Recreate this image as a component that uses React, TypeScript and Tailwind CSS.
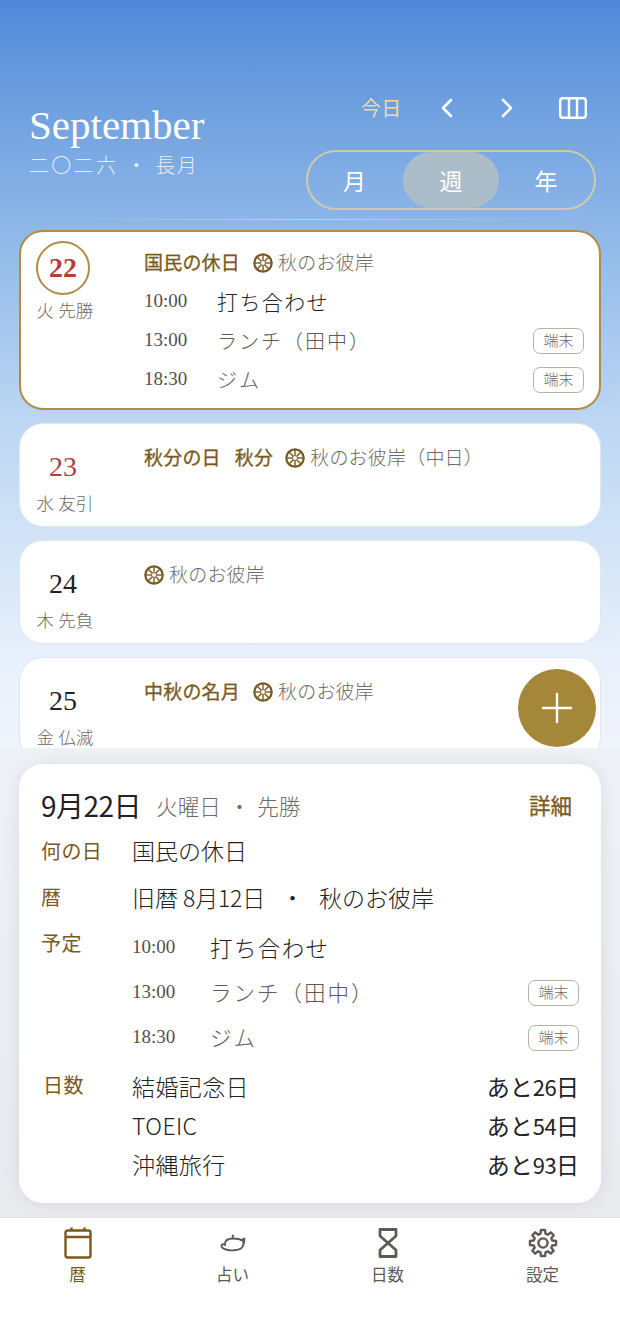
import React from "react";

const jp = "font-['Noto_Sans_CJK_JP','Noto_Sans',sans-serif]";
const serif = "font-['Liberation_Serif',serif] oldstyle-nums";

function gearPath() {
  const n = 8;
  const pts: string[] = [];
  for (let i = 0; i < n; i++) {
    const c = (i * 360) / n - 90;
    const seq: [number, number][] = [
      [c - 15, 9.6],
      [c - 9, 13.2],
      [c + 9, 13.2],
      [c + 15, 9.6],
    ];
    for (const [a, r] of seq) {
      const t = (a * Math.PI) / 180;
      pts.push(`${(15 + r * Math.cos(t)).toFixed(2)} ${(15 + r * Math.sin(t)).toFixed(2)}`);
    }
  }
  return "M" + pts.join(" L") + " Z";
}

function Wheel() {
  const spokes = [0, 45, 90, 135];
  return (
    <svg width="20" height="20" viewBox="0 0 20 20" className="shrink-0">
      <circle cx="10" cy="10" r="8.7" fill="none" stroke="#7a5a1c" strokeWidth="2.2" />
      {spokes.map((a) => (
        <line key={a} x1="10" y1="2" x2="10" y2="18" stroke="#7a5a1c" strokeWidth="1.4" transform={`rotate(${a} 10 10)`} />
      ))}
      <circle cx="10" cy="10" r="2.4" fill="#fff" stroke="#7a5a1c" strokeWidth="0.8" />
    </svg>
  );
}

function Holiday({ children }: { children: React.ReactNode }) {
  return <span className="text-[19px] font-normal tracking-[0.2px] text-[#7a5a1c] [-webkit-text-stroke:0.3px_#7a5a1c]">{children}</span>;
}

function Higan({ text = "秋のお彼岸" }: { text?: string }) {
  return (
    <span className="flex items-center gap-[5px]">
      <Wheel />
      <span className="text-[19px] font-light tracking-[0.2px] text-[#6f6a63]">{text}</span>
    </span>
  );
}

function Tag() {
  return (
    <span className="flex h-[26px] w-[51px] items-center justify-center rounded-[7px] border-[1.5px] border-[#b5b2ac] text-[15px] font-light text-[#6f6a63]">
      端末
    </span>
  );
}

function DayLeft({ num, sub, color, ring }: { num: string; sub: string; color: string; ring?: boolean }) {
  return (
    <div className={`flex w-[88px] shrink-0 flex-col items-center ${ring ? "" : "ml-[1px]"}`}>
      <div className={`mr-[4px] flex h-[54px] w-[54px] items-center justify-center rounded-full ${ring ? "border-2 border-[#b08d44]" : ""}`}>
        <span className={`${serif} text-[28px] leading-none ${ring ? "font-bold" : "font-normal"} ${color}`}>{num}</span>
      </div>
      <span className={`text-[17.5px] font-light leading-[24px] tracking-[0.2px] text-[#6f6a63] ${ring ? "mt-[3px]" : "-mt-[3px]"}`}>{sub}</span>
    </div>
  );
}

function TimeRow({ time, title, tag, dark, w, h, ts }: { time: string; title: string; tag?: boolean; dark?: boolean; w: string; h: string; ts: string }) {
  return (
    <div className={`flex items-center ${h}`}>
      <span className={`${serif} ${w} shrink-0 text-[19px] text-[#555049]`}>{time}</span>
      <span className={`flex-1 font-light ${ts} ${dark ? "tracking-[1.4px] text-[#25221e]" : "tracking-[2px] text-[#5f5a53]"}`}>{title}</span>
      {tag && <Tag />}
    </div>
  );
}

function Label({ children, className = "" }: { children: React.ReactNode; className?: string }) {
  return <div className={`w-[91px] shrink-0 text-[20px] font-normal leading-[28px] tracking-[0.4px] text-[#7a5a1c] ${className}`}>{children}</div>;
}

function CountRow({ name, n }: { name: string; n: string }) {
  return (
    <div className="flex h-[39px] items-center justify-between text-[#25221e]">
      <span className="text-[23px] font-light tracking-[0.4px]">{name}</span>
      <span className="text-[23px] font-normal">
        あと<span className="text-[22px] tracking-[-0.6px]">{n}</span>日
      </span>
    </div>
  );
}

function NavItem({ icon, label, active }: { icon: React.ReactNode; label: string; active?: boolean }) {
  return (
    <div className="flex flex-col items-center">
      <div className="flex h-[32px] items-center justify-center">{icon}</div>
      <span className={`mt-[3px] text-[16.5px] font-normal leading-[24px] ${active ? "text-[#7a5a1c]" : "text-[#5f5a53]"}`}>{label}</span>
    </div>
  );
}

export default function App() {
  return (
    <div className={`${jp} flex h-[1342px] w-[620px] flex-col overflow-hidden bg-white`}>
      <div className="relative h-[748px] shrink-0 overflow-hidden bg-[linear-gradient(180deg,#5088d9_0%,#6498dd_9%,#8fb8e8_31%,#bcd6f3_56%,#e8f0fb_88%,#f0f4fb_100%)]">
        <div className="flex h-[219px] items-start justify-between pl-[29px] pr-[24px] pt-[90px]">
          <div className="flex flex-col pt-[12px]">
            <span className={`${serif} text-[41px] leading-[46px] text-white`}>September</span>
            <span className="mt-[3px] flex text-[20px] font-light leading-[28px] text-[#e4edf9]">
              <span className="tracking-[2.3px]">二〇二六</span>
              <span className="ml-[8px]">・</span>
              <span className="ml-[9px] tracking-[1.5px]">長月</span>
            </span>
          </div>
          <div className="flex w-[290px] flex-col">
            <div className="flex h-[36px] items-center pl-[55px]">
              <span className="text-[20px] tracking-[0.3px] text-[#f0dc9a]">今日</span>
              <svg width="14" height="20" viewBox="0 0 14 20" className="ml-[38px]" fill="none" stroke="#fff" strokeWidth="2.6" strokeLinecap="round" strokeLinejoin="round"><path d="M11 2 L3 10 L11 18" /></svg>
              <svg width="14" height="20" viewBox="0 0 14 20" className="ml-[46px]" fill="none" stroke="#fff" strokeWidth="2.6" strokeLinecap="round" strokeLinejoin="round"><path d="M3 2 L11 10 L3 18" /></svg>
              <svg width="28" height="22" viewBox="0 0 28 22" className="ml-[45px]" fill="none" stroke="#fff" strokeWidth="2.4" strokeLinejoin="round"><rect x="1.2" y="1.2" width="25.6" height="19.6" rx="2.5" /><path d="M10 1.5 V20.5 M18 1.5 V20.5" /></svg>
            </div>
            <div className="mt-[24px] flex h-[60px] items-stretch rounded-full border-2 border-[#cdcba9] px-[4px] text-[23px] text-white">
              <div className="flex w-[91px] items-center justify-center pr-[6px] pt-[1px]">月</div>
              <div className="flex w-[96px] items-center justify-center rounded-[48px] bg-[#abbdc9] pt-[1px]">週</div>
              <div className="flex w-[91px] items-center justify-center pl-[3px] pt-[1px]">年</div>
            </div>
          </div>
        </div>
        <div className="mx-auto h-px w-[480px] bg-[linear-gradient(90deg,transparent,#c7d3dc,transparent)]" />
        <div className="flex flex-col gap-[13px] px-[19px] pt-[10px]">
          <div className="flex h-[180px] rounded-[24px] border-2 border-[#b08d44] bg-white pr-[15px] pt-[9px]">
            <DayLeft num="22" sub="火 先勝" color="text-[#b43c3c]" ring />
            <div className="ml-[35px] flex flex-1 flex-col">
              <div className="mt-[8px] flex h-[27px] items-center gap-[13px]">
                <Holiday>国民の休日</Holiday>
                <Higan />
              </div>
              <div className="mt-[6px]">
                <TimeRow time="10:00" title="打ち合わせ" dark w="w-[73px]" h="h-[39px]" ts="text-[21px]" />
                <TimeRow time="13:00" title="ランチ（田中）" tag w="w-[73px]" h="h-[39px]" ts="text-[20px]" />
                <TimeRow time="18:30" title="ジム" tag w="w-[73px]" h="h-[39px]" ts="text-[20px]" />
              </div>
            </div>
          </div>

          <div className="flex h-[104px] rounded-[24px] border border-[#dfe7f2] bg-white pt-[16px]">
            <DayLeft num="23" sub="水 友引" color="text-[#b43c3c]" />
            <div className="ml-[35px] mt-[4px] flex h-[27px] items-center">
              <Holiday>秋分の日</Holiday>
              <span className="ml-[14px]"><Holiday>秋分</Holiday></span>
              <span className="ml-[12px]"><Higan text="秋のお彼岸（中日）" /></span>
            </div>
          </div>

          <div className="flex h-[104px] rounded-[24px] border border-[#dfe7f2] bg-white pt-[16px]">
            <DayLeft num="24" sub="木 先負" color="text-[#25221e]" />
            <div className="ml-[35px] mt-[4px] flex h-[27px] items-center">
              <Higan />
            </div>
          </div>

          <div className="flex h-[104px] rounded-[24px] border border-[#dfe7f2] bg-white pt-[16px]">
            <DayLeft num="25" sub="金 仏滅" color="text-[#25221e]" />
            <div className="ml-[35px] mt-[4px] flex h-[27px] items-center gap-[13px]">
              <Holiday>中秋の名月</Holiday>
              <Higan />
            </div>
          </div>
        </div>
        <div className="absolute right-[24px] top-[669px] flex h-[78px] w-[78px] items-center justify-center rounded-full bg-[#a5873a]">
          <svg width="32" height="32" viewBox="0 0 32 32" stroke="#fff" strokeWidth="2.4" strokeLinecap="round"><path d="M16 2 V30 M2 16 H30" /></svg>
        </div>
      </div>

      <div className="flex h-[469px] shrink-0 flex-col bg-[linear-gradient(180deg,#eef1f6,#e8eaee)] px-[19px] pt-[16px]">
        <div className="flex h-[439px] flex-col rounded-[24px] bg-white px-[22px] pt-[19px] shadow-[0_0_16px_rgba(60,70,90,0.10)]">
          <div className="flex h-[44px] items-center">
            <span className="text-[28px] leading-none tracking-[-0.5px] text-[#25221e]">9月22日</span>
            <span className="ml-[15px] mt-[3px] flex text-[21.5px] font-light text-[#6f6a63]">
              <span>火曜日</span>
              <span className="ml-[8px]">・</span>
              <span className="ml-[7px]">先勝</span>
            </span>
            <span className="ml-auto mr-[7px] text-[21.5px] font-normal text-[#7a5a1c] [-webkit-text-stroke:0.3px_#7a5a1c]">詳細</span>
          </div>
          <div className="mt-[2px] flex h-[47px] items-start pt-[3px]">
            <Label className="pt-[5px]">何の日</Label>
            <span className="text-[23px] font-light leading-[36px] text-[#25221e]">国民の休日</span>
          </div>
          <div className="flex h-[49px] items-start pt-[3px]">
            <Label className="pt-[4px]">暦</Label>
            <span className="flex text-[23px] font-light leading-[36px] text-[#25221e]">
              <span>旧暦 <span className="tracking-[-0.2px]">8月12日</span></span>
              <span className="ml-[16px]">・</span>
              <span className="ml-[15px]">秋のお彼岸</span>
            </span>
          </div>
          <div className="flex items-start">
            <Label className="pt-[4px]">予定</Label>
            <div className="flex-1">
              <TimeRow time="10:00" title="打ち合わせ" dark w="w-[78px]" h="h-[45px]" ts="text-[22.5px]" />
              <TimeRow time="13:00" title="ランチ（田中）" tag w="w-[78px]" h="h-[45px]" ts="text-[21.5px]" />
              <TimeRow time="18:30" title="ジム" tag w="w-[78px]" h="h-[45px]" ts="text-[21.5px]" />
            </div>
          </div>
          <div className="mt-[7px] flex items-start">
            <Label className="pl-[2px] pt-[4px]">日数</Label>
            <div className="flex-1">
              <CountRow name="結婚記念日" n="26" />
              <CountRow name="TOEIC" n="54" />
              <CountRow name="沖縄旅行" n="93" />
            </div>
          </div>
        </div>
      </div>

      <div className="grid flex-1 grid-cols-4 border-t border-[#dfe0e2] bg-white pt-[9px]">
        <NavItem active label="暦" icon={
          <svg width="28" height="32" viewBox="0 0 28 32" fill="none" stroke="#7a5a1c" strokeWidth="2.4" strokeLinejoin="round"><rect x="1.5" y="3.5" width="25" height="27" rx="2" /><path d="M1.5 10 H26.5 M7.5 0.5 V3.5 M20.5 0.5 V3.5" /></svg>
        } />
        <NavItem label="占い" icon={
          <svg width="26" height="18" viewBox="0 0 26 18" fill="none" stroke="#5f5a53" strokeWidth="1.9" strokeLinecap="round" strokeLinejoin="round"><path d="M5 10 C5 6 9 4.5 13 4.5 C17 4.5 20 5 22.5 6.5 C24 8 24 12 21 14.5 C18 16.5 11 17 6 15.5 C3 14.5 1 13.5 1.5 11.5 C2 10 4 10 5 11" /><path d="M21 6 L24.5 4.5 L24 9" /><path d="M12.5 4 L13 1.5" /></svg>
        } />
        <NavItem label="日数" icon={
          <svg width="20" height="32" viewBox="0 0 20 32" fill="none" stroke="#5f5a53" strokeWidth="2.8" strokeLinejoin="round"><path d="M2 2.5 H18 V9 L2 23 V29.5 H18 V23 L2 9 Z" /></svg>
        } />
        <NavItem label="設定" icon={
          <svg width="30" height="30" viewBox="0 0 30 30" fill="none" stroke="#5f5a53" strokeWidth="2.4" strokeLinejoin="round"><path d={gearPath()} /><circle cx="15" cy="15" r="4.6" /></svg>
        } />
      </div>
    </div>
  );
}
